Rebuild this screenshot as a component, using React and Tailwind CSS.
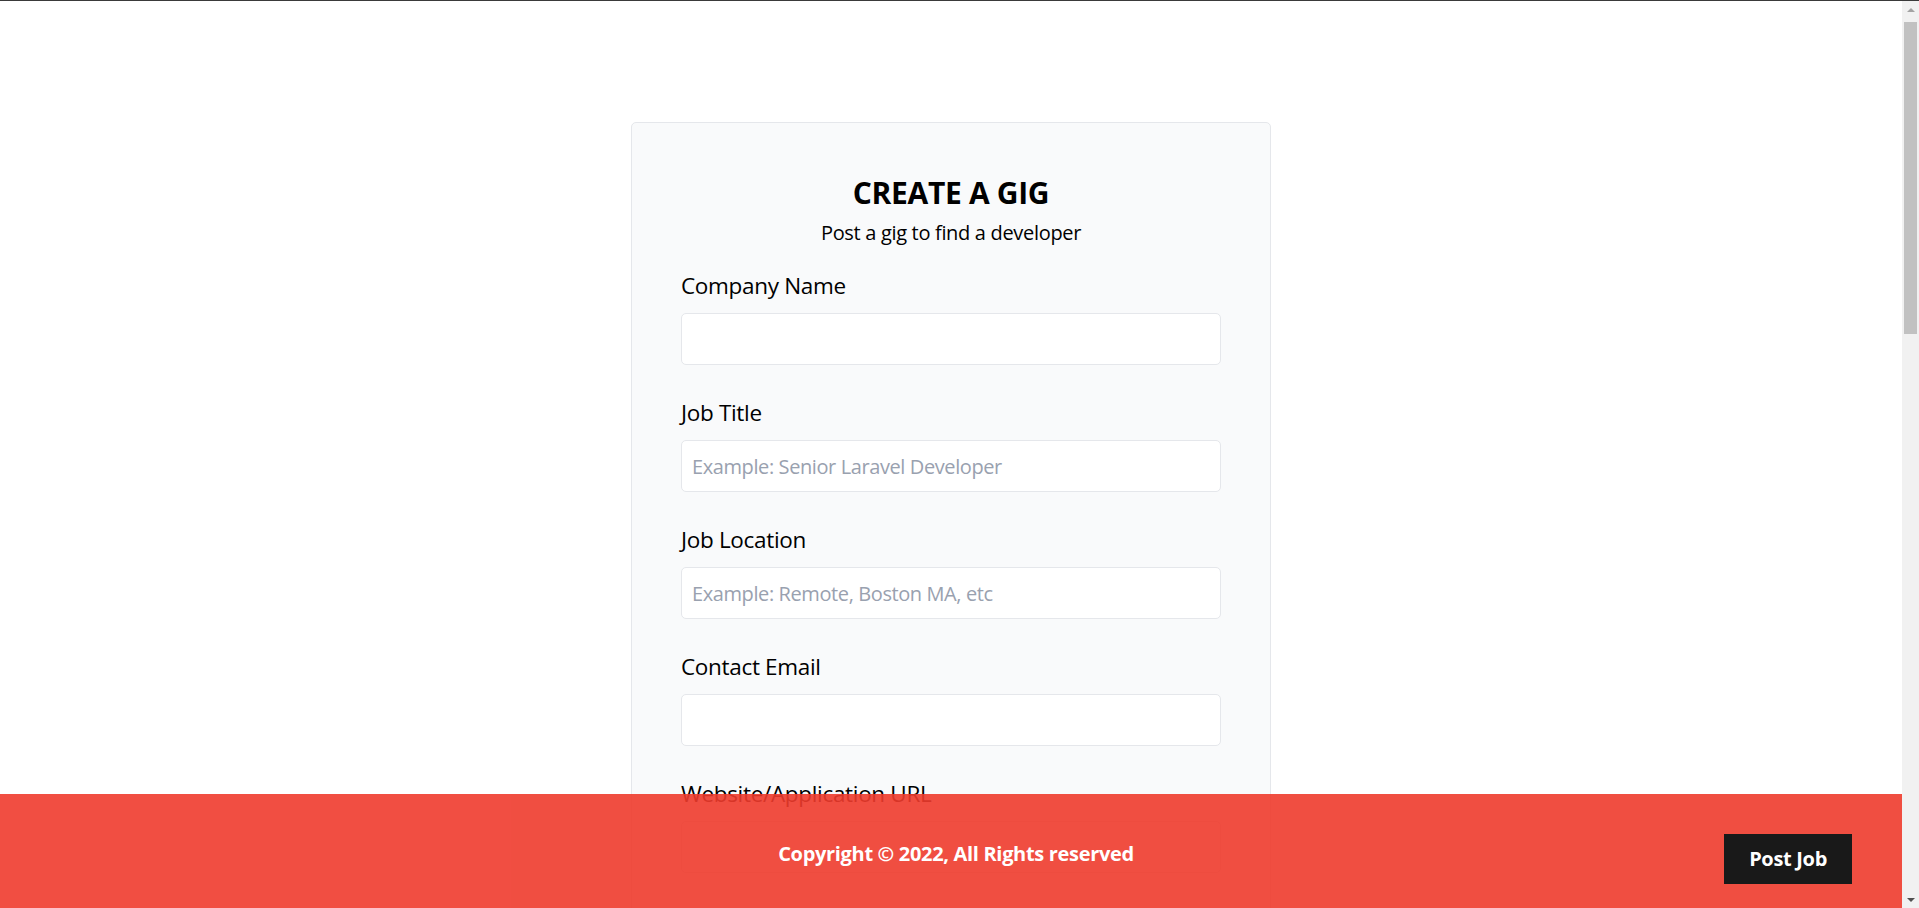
import { useState } from 'react'

const Field = ({ label, name, type = 'text', placeholder }) => {
  const [value, setValue] = useState('')
  return (
    <div className="mb-[30px]">
      <label htmlFor={name} className="mb-[10px] inline-block text-[22.5px] leading-[35px]">
        {label}
      </label>
      <input
        id={name}
        name={name}
        type={type}
        value={value}
        onChange={(e) => setValue(e.target.value)}
        placeholder={placeholder}
        className="block h-[52px] w-full rounded-[5px] border border-gray-200 bg-white p-[10px] text-[20px] leading-[30px] tracking-[-0.02em] placeholder:text-gray-400 focus:outline-none"
      />
    </div>
  )
}

// Windows-style scrollbar the page shows on the right
const Scrollbar = () => (
  <div className="fixed top-[1px] right-0 bottom-0 flex w-[17px] flex-col bg-[#f1f1f1]">
    <div className="flex h-[17px] items-center justify-center">
      <div className="h-0 w-0 border-x-[4px] border-b-[4px] border-x-transparent border-b-[#a3a3a3]" />
    </div>
    <div className="mx-[2px] mt-[4px] h-[312px] bg-[#c1c1c1]" />
    <div className="flex-1" />
    <div className="flex h-[17px] items-center justify-center">
      <div className="h-0 w-0 border-x-[4px] border-t-[4px] border-x-transparent border-t-[#505050]" />
    </div>
  </div>
)

const App = () => {
  return (
    <div
      className="min-h-screen border-t border-[#3a3a3a] bg-white pr-[17px] tracking-[-0.02em] text-black"
      style={{ fontFamily: '"Open Sans", "Noto Sans", sans-serif' }}
    >
      <main className="mt-[121px] mb-[240px]">
        {/* Create gig card */}
        <div className="mx-auto w-[640px] rounded-[5px] border border-gray-200 bg-gray-50 px-[49px] pt-[50px] pb-[49px]">
          <header className="text-center">
            <h2 className="mb-[5px] text-[30px] font-bold uppercase leading-[40px]">Create a Gig</h2>
            <p className="mb-[20px] text-[20px] leading-[30px]">Post a gig to find a developer</p>
          </header>

          <form onSubmit={(e) => e.preventDefault()}>
            <Field label="Company Name" name="company" />
            <Field label="Job Title" name="title" placeholder="Example: Senior Laravel Developer" />
            <Field label="Job Location" name="location" placeholder="Example: Remote, Boston MA, etc" />
            <Field label="Contact Email" name="email" type="email" />
            <Field label="Website/Application URL" name="website" />
            <Field label="Tags (Comma Separated)" name="tags" placeholder="Example: Laravel, Backend, Postgres, etc" />

            <div className="mb-[30px]">
              <label className="mb-[10px] inline-block text-[22.5px] leading-[35px]">Company Logo</label>
              <input type="file" className="block w-full rounded-[5px] border border-gray-200 bg-white p-[10px] text-[20px]" />
            </div>

            <div className="mb-[30px]">
              <label className="mb-[10px] inline-block text-[22.5px] leading-[35px]">Job Description</label>
              <textarea
                rows={10}
                placeholder="Include tasks, requirements, salary, etc"
                className="block w-full rounded-[5px] border border-gray-200 bg-white p-[10px] text-[20px] leading-[30px] placeholder:text-gray-400 focus:outline-none"
              />
            </div>

            <div className="mb-[30px] flex items-center">
              <button className="rounded-[5px] bg-[#ef3b2d] px-[20px] py-[10px] text-[20px] leading-[30px] text-white hover:bg-black">
                Create Gig
              </button>
              <a href="#" className="ml-[20px] text-[20px] text-black">Back</a>
            </div>
          </form>
        </div>
      </main>

      {/* Footer */}
      <footer className="fixed right-[17px] bottom-0 left-0 flex h-[114px] items-center justify-center bg-[#ef3b2d] font-bold text-white opacity-90">
        <p className="ml-[10px] pt-[5px] text-[20px] leading-[30px]">Copyright © 2022, All Rights reserved</p>
        <a
          href="#"
          className="absolute top-[40px] right-[50px] bg-black px-[25px] py-[10px] text-[20px] leading-[30px] text-white"
        >
          Post Job
        </a>
      </footer>

      <Scrollbar />
    </div>
  )
}

export default App
